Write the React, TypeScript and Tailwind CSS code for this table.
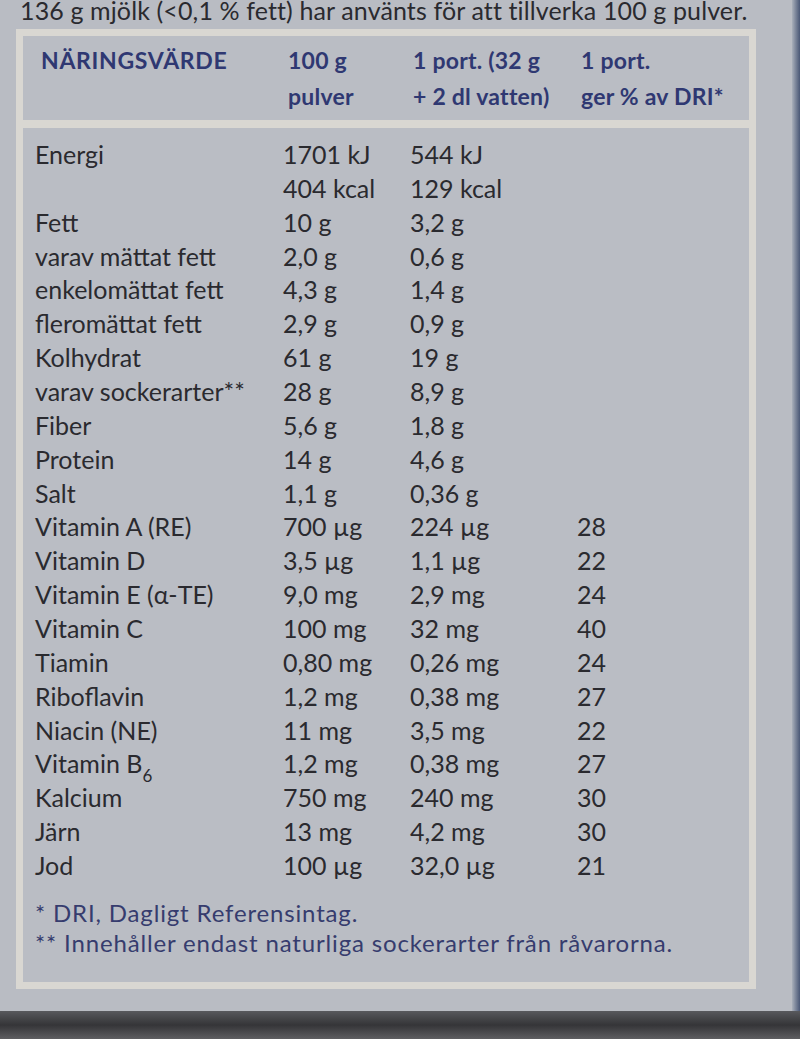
const rows: [string | React.ReactNode, string, string, string][] = [
  ["Energi", "1701 kJ", "544 kJ", ""],
  ["", "404 kcal", "129 kcal", ""],
  ["Fett", "10 g", "3,2 g", ""],
  ["varav mättat fett", "2,0 g", "0,6 g", ""],
  ["enkelomättat fett", "4,3 g", "1,4 g", ""],
  ["fleromättat fett", "2,9 g", "0,9 g", ""],
  ["Kolhydrat", "61 g", "19 g", ""],
  ["varav sockerarter**", "28 g", "8,9 g", ""],
  ["Fiber", "5,6 g", "1,8 g", ""],
  ["Protein", "14 g", "4,6 g", ""],
  ["Salt", "1,1 g", "0,36 g", ""],
  ["Vitamin A (RE)", "700 µg", "224 µg", "28"],
  ["Vitamin D", "3,5 µg", "1,1 µg", "22"],
  ["Vitamin E (α-TE)", "9,0 mg", "2,9 mg", "24"],
  ["Vitamin C", "100 mg", "32 mg", "40"],
  ["Tiamin", "0,80 mg", "0,26 mg", "24"],
  ["Riboflavin", "1,2 mg", "0,38 mg", "27"],
  ["Niacin (NE)", "11 mg", "3,5 mg", "22"],
  [
    <>
      Vitamin B<sub className="text-[17px] align-[-4px]">6</sub>
    </>,
    "1,2 mg",
    "0,38 mg",
    "27",
  ],
  ["Kalcium", "750 mg", "240 mg", "30"],
  ["Järn", "13 mg", "4,2 mg", "30"],
  ["Jod", "100 µg", "32,0 µg", "21"],
];

export default function App() {
  return (
    <div className="relative h-[1039px] w-[800px] overflow-hidden bg-[#b9bcc3] font-['Lato',sans-serif] text-[#2a2a2f]">
      <p className="mt-[-3px] pl-[20px] text-[25px] leading-[26px] tracking-[0.005em] whitespace-nowrap">
        136 g mjölk (&lt;0,1 % fett) har använts för att tillverka 100 g pulver.
      </p>

      <div className="ml-[16px] mt-[6px] flex w-[740px] flex-col border-[7px] border-[#d9d7d2] bg-[#babdc4]">
        <div className="grid h-[84px] grid-cols-[248px_127px_167px_1fr] pl-[15px] pt-[6px] text-[23px] leading-[36px] font-bold tracking-[0.01em] text-[#2f3872]">
          <div className="pl-[3px] tracking-[0.03em]">NÄRINGSVÄRDE</div>
          <div className="pl-[2px]">
            100 g
            <br />
            pulver
          </div>
          <div>
            1 port. (32 g
            <br />+ 2 dl vatten)
          </div>
          <div className="pl-[1px] whitespace-nowrap">
            1 port.
            <br />
            ger % av DRI*
          </div>
        </div>
        <div className="h-[8px] bg-[#d9d7d2]" />
        <div className="flex flex-col pl-[12px] pt-[8px] pb-[24px]">
          {rows.map((r, i) => (
            <div
              key={i}
              className="grid h-[33.86px] grid-cols-[248px_127px_167px_1fr] items-center text-[25px] tracking-[0em] whitespace-nowrap"
            >
              <div>{r[0]}</div>
              <div>{r[1]}</div>
              <div>{r[2]}</div>
              <div>{r[3]}</div>
            </div>
          ))}
          <div className="mt-[17px] text-[24px] leading-[30px] tracking-[0.035em] text-[#363c6e] whitespace-nowrap">
            <div>* DRI, Dagligt Referensintag.</div>
            <div>** Innehåller endast naturliga sockerarter från råvarorna.</div>
          </div>
        </div>
      </div>

      <div className="absolute right-0 top-0 h-[1012px] w-[8px] bg-gradient-to-r from-[#aab0ba] to-[#4a5775]" />
      <div className="absolute bottom-0 left-0 h-[28px] w-full bg-gradient-to-b from-[#58595d] via-[#353538] to-[#5e5e61]" />
    </div>
  );
}
